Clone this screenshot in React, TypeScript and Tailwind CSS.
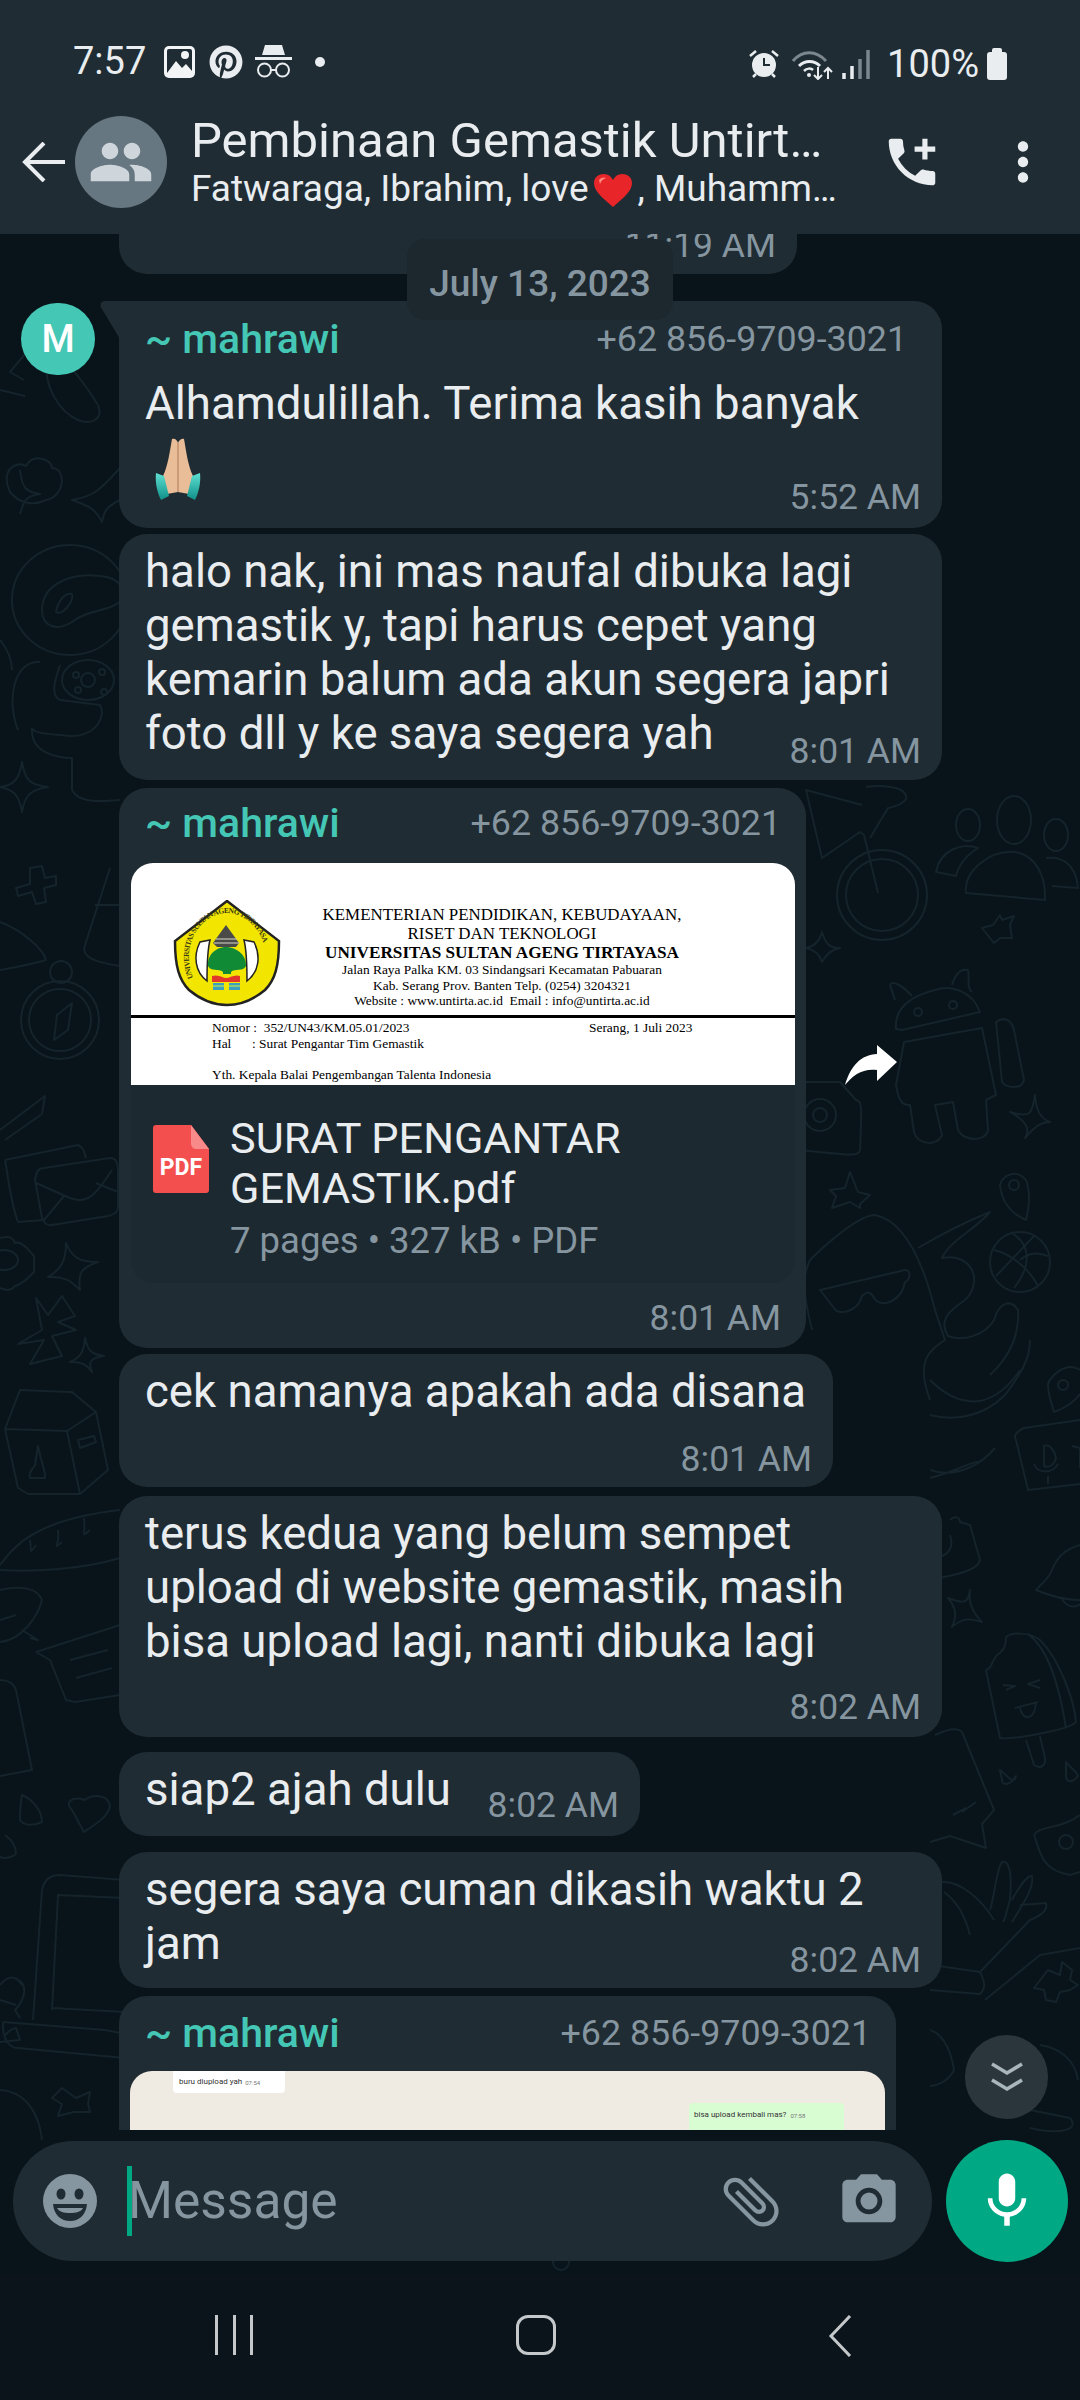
import type { ReactNode } from "react";
import { FaPinterest } from "react-icons/fa";
import { MdAddIcCall, MdAttachFile, MdCameraAlt, MdMic, MdMoreVert, MdPeople } from "react-icons/md";

const dots = [
  [44, 345], [74, 372], [106, 352], [70, 425], [36, 520], [74, 524], [118, 440], [60, 860], [30, 835], [75, 835], [87, 858], [15, 1085],
  [69, 905], [960, 805], [929, 840], [957, 880], [938, 936], [875, 962], [855, 1000], [869, 1012], [995, 970], [1015, 990], [1036, 935], [1040, 1023],
  [1047, 1067], [896, 1128], [900, 1154], [918, 1155], [914, 1195], [1030, 1155], [978, 1165], [1058, 1172], [1070, 1225], [998, 1304],
  [102, 1241], [14, 1318], [14, 1362], [110, 1306], [66, 1600], [100, 1590], [78, 1606], [39, 1690], [51, 1730], [80, 1734], [80, 1762], [98, 1780],
  [52, 1788], [50, 1854], [92, 1854], [34, 2060], [58, 2068], [1002, 1492], [1017, 1518], [1047, 1512], [1002, 1542], [1006, 1564], [1008, 1593],
  [1030, 1608], [1072, 1632], [982, 1650], [947, 1656], [972, 1673], [951, 1684], [964, 1714], [1010, 1803], [937, 1855], [960, 1860], [1058, 2025],
  [961, 2034], [565, 2250], [30, 2265], [70, 2268],
];

function Wallpaper() {
  return (
    <svg className="absolute inset-0 h-full w-full" viewBox="0 234 1080 2040" fill="none" stroke="#15232b" strokeWidth="2" strokeLinejoin="round">
      {/* upper left */}
      <path d="M48 350C70 360 92 395 98 405 104 420 90 425 78 420 60 412 40 385 48 350Z" />
      <path d="M10 492C0 470 16 460 26 466 34 452 52 460 52 468 66 468 66 496 46 500 34 506 20 504 10 492Z" />
      <path d="M120 468C98 492 94 496 72 500 90 506 96 510 102 522 104 510 108 506 120 500M20 470C22 488 26 492 40 494 26 496 24 500 20 514M25 354L10 372 24 380M0 390L25 396" />
      <ellipse cx="70" cy="600" rx="58" ry="55" />
      <path d="M42 610C42 585 70 572 100 576 122 578 124 590 122 600 110 612 90 608 72 622 56 632 42 626 42 610ZM56 612C58 600 66 592 72 594 74 602 62 616 56 612ZM40 662C14 660 6 700 18 730M60 665C55 680 50 695 60 700L100 705C106 715 98 736 70 736 50 734 34 734 32 728M32 728C30 755 62 758 72 758L72 790C80 806 110 800 120 800M0 640C8 650 12 660 12 670" />
      <ellipse cx="88" cy="680" rx="26" ry="20" />
      <circle cx="88" cy="680" r="7" />
      <circle cx="76" cy="675" r="3" />
      <circle cx="102" cy="672" r="3" />
      <circle cx="78" cy="690" r="3" />
      <circle cx="104" cy="692" r="3" />
      <path d="M22 762C25 780 30 785 48 787 30 790 25 795 22 812 19 795 14 790 0 787 14 785 19 780 22 762ZM30 868L42 866 45 878 56 876 56 885 44 888 46 902 36 904 32 892 18 896 16 888 30 884Z" />
      <path d="M110 868L85 945C81 956 92 962 120 966M95 905H120M0 922C22 930 44 950 46 960 30 965 10 968 0 970" />
      <circle cx="60" cy="1020" r="39" />
      <circle cx="60" cy="1020" r="31" />
      <circle cx="61" cy="972" r="11" />
      <path d="M54 1040L57 1015 72 1003 68 1030Z" />
      {/* lower left */}
      <path d="M0 1130L45 1096 42 1114 5 1140" />
      <path d="M5 1160L78 1145C84 1148 84 1152 86 1158M18 1222C10 1200 8 1175 5 1160M18 1222L44 1220" />
      <path d="M35 1180C36 1170 40 1168 44 1168L110 1158C116 1158 118 1162 118 1172V1205C118 1214 114 1214 108 1216L52 1225C46 1226 44 1222 42 1218ZM36 1183L70 1198C86 1204 94 1198 112 1170M96 1183L118 1192M44 1220L64 1196" />
      <path d="M0 1238C8 1236 12 1236 15 1243 22 1240 30 1252 34 1256V1272C26 1280 22 1284 15 1286 10 1292 4 1290 0 1288" />
      <ellipse cx="4" cy="1260" rx="14" ry="10" />
      <path d="M66 1243C72 1258 80 1262 98 1262 80 1268 78 1274 80 1290 72 1282 66 1276 48 1277 60 1270 66 1262 66 1243Z" />
      <path d="M36 1298L48 1315 62 1296 75 1316 58 1322 76 1330 52 1336 62 1356 30 1364 44 1340 18 1344 42 1330Z" />
      <path d="M85 1338C88 1350 90 1354 104 1356 90 1358 88 1362 92 1372 86 1364 82 1362 70 1362 80 1358 84 1352 85 1338Z" />
      <path d="M20 1390L70 1392H72L96 1412 108 1470 80 1494 28 1494 18 1488 5 1429ZM5 1429L67 1431 96 1412M67 1431L80 1494" />
      <path d="M35 1465C32 1470 28 1473 30 1478H45C46 1472 42 1466 38 1446ZM78 1440L94 1436 96 1442 80 1448Z" />
      <path d="M0 1565C12 1550 30 1520 120 1510M0 1570C30 1572 80 1570 120 1558M30 1540C32 1550 28 1556 36 1545M58 1530C60 1546 52 1550 62 1542M84 1518C86 1536 80 1538 90 1530" />
      <path d="M0 1590C20 1585 38 1588 42 1600 38 1616 22 1640 0 1642M22 1630L38 1640 30 1638M0 1620L16 1615" />
      <path d="M36 1652L120 1625M36 1652L50 1660 66 1700 75 1702 120 1695M70 1660L108 1650M76 1678L112 1668" />
      <path d="M0 1680C10 1680 14 1684 16 1690L32 1770 0 1776" />
      <path d="M72 1810C64 1802 72 1796 85 1800 92 1794 108 1794 110 1806 108 1818 92 1826 84 1832ZM22 1795C34 1800 42 1812 42 1822 34 1826 24 1826 20 1820 20 1814 20 1806 22 1795ZM5 1835C12 1840 16 1846 16 1854 8 1860 0 1858 0 1856" />
      <path d="M33 2020L42 1890C44 1880 50 1875 60 1875L125 1880M52 2010L58 1895 125 1898M52 2008L125 2012M3 2022L105 2030 125 2034M3 2022C2 2040 10 2048 18 2048L125 2058" />
      <path d="M0 1985C8 1975 16 1975 22 1985L18 1980C28 1985 25 2000 15 2010L20 2018M0 2000L16 2005" />
      <path d="M5 2035C8 2032 12 2028 16 2028L20 2040 0 2042" />
      <path d="M0 2090C30 2092 40 2120 42 2140M62 2088L76 2098 90 2092 88 2104 90 2112 74 2112 58 2116 62 2104 52 2098Z" />
      {/* right, around the forward button */}
      <circle cx="882" cy="895" r="45" />
      <circle cx="882" cy="895" r="36" />
      <path d="M878 893L864 835 860 832 822 858 806 790 862 805M870 838L888 808C900 806 908 800 906 796 904 786 880 785 866 787" />
      <ellipse cx="968" cy="825" rx="12" ry="16" />
      <ellipse cx="1014" cy="820" rx="17" ry="24" />
      <ellipse cx="1056" cy="835" rx="12" ry="16" />
      <path d="M966 893C964 870 990 850 1016 852 1036 856 1046 876 1045 900ZM936 872C940 850 962 842 978 848 962 858 958 868 956 876ZM1046 858C1062 856 1076 864 1078 888L1052 886" />
      <path d="M1000 915L993 925 982 928 990 938 994 943 1000 938 1012 938 1010 925 1014 916 1002 920ZM822 932C826 945 830 948 840 948 830 950 826 955 822 962 820 955 816 950 806 948 816 946 820 940 822 932Z" />
      <path d="M896 1029C894 1005 915 995 935 990 950 985 972 990 980 1012L902 1030ZM895 1000L890 985C892 980 902 985 912 996M952 985C955 975 960 968 968 970 970 978 966 988 972 992" />
      <circle cx="918" cy="1012" r="4" />
      <circle cx="953" cy="1005" r="4" />
      <path d="M904 1042L982 1028 996 1095 986 1100 988 1130C986 1142 964 1142 958 1130L953 1102 935 1105 942 1135C938 1146 918 1146 914 1132L910 1105C900 1106 898 1096 896 1085ZM996 1022C1004 1016 1012 1020 1014 1030L1024 1080C1022 1090 1006 1088 1002 1082Z" />
      <path d="M1035 1095C1032 1115 1030 1118 1010 1112 1028 1122 1030 1130 1025 1138 1036 1125 1042 1122 1050 1122 1040 1118 1036 1110 1035 1095Z" />
      <path d="M800 1082H840L856 1100C862 1102 862 1104 860 1150 858 1156 855 1156 800 1150" />
      <circle cx="820" cy="1115" r="16" />
      <circle cx="820" cy="1115" r="7" />
      <path d="M850 1172L858 1192 870 1195 860 1204 860 1208 850 1202 832 1208 836 1196 830 1190 845 1188ZM1000 1185C1002 1176 1016 1168 1026 1180 1032 1196 1028 1212 1026 1220 1012 1214 1002 1204 1000 1185Z" />
      <circle cx="1014" cy="1185" r="5" />
      <ellipse cx="1020" cy="1262" rx="30" ry="30" />
      <path d="M994 1250C1012 1254 1030 1270 1038 1286M1012 1233C1026 1242 1036 1260 1014 1288M1034 1236L996 1276M1048 1256C1038 1252 1030 1252 1020 1260" />
      <path d="M810 1260C830 1240 860 1215 875 1215 900 1220 920 1250 935 1310L945 1340C930 1350 915 1360 930 1400M812 1330C805 1300 800 1280 810 1260" />
      <path d="M820 1290L905 1270C912 1270 910 1280 905 1282 902 1300 882 1310 874 1298 870 1290 866 1292 862 1296 858 1312 838 1316 834 1308Z" />
      <path d="M918 1248C945 1232 970 1220 990 1212 975 1230 950 1240 942 1258 970 1252 985 1280 965 1300 950 1310 938 1320 948 1336 964 1342 985 1335 994 1320 1000 1300 1012 1300 1018 1310 1020 1340 1006 1360 990 1375" />
      {/* lower right */}
      <path d="M1016 1440C1012 1434 1020 1430 1024 1428L1080 1420M1016 1440L1028 1490 1080 1484" />
      <path d="M1044 1446C1050 1444 1054 1450 1056 1458 1054 1466 1048 1468 1044 1466ZM1034 1464C1038 1474 1052 1474 1058 1464M1048 1476V1484M1072 1446L1080 1448V1468" />
      <path d="M1080 1370C1066 1360 1048 1378 1048 1385 1048 1395 1052 1405 1054 1412 1066 1408 1076 1400 1080 1394" />
      <circle cx="1063" cy="1385" r="5" />
      <path d="M930 1380C950 1400 986 1420 1020 1370M930 1415C950 1420 980 1420 1005 1395 1020 1375 1030 1360 1030 1340M930 1470C960 1480 985 1460 995 1448M930 1478C960 1470 975 1460 978 1462" />
      <path d="M1080 1545C1062 1550 1056 1560 1052 1570 1048 1580 1040 1585 1036 1590 1050 1596 1064 1600 1080 1600M1062 1598C1066 1608 1076 1608 1080 1604" />
      <path d="M950 1520C956 1515 960 1518 960 1522L970 1525 980 1560C978 1570 960 1574 930 1580M930 1555C945 1560 955 1550 950 1535" />
      <path d="M970 1590C968 1602 966 1605 948 1598 958 1610 956 1618 952 1627 962 1618 970 1618 982 1622 972 1612 968 1602 970 1590Z" />
      <path d="M1006 1637C1006 1648 1002 1652 996 1656 990 1665 992 1668 986 1670L1000 1738C1010 1740 1070 1730 1076 1722 1074 1700 1060 1660 1040 1640 1030 1632 1012 1632 1006 1637ZM1028 1634C1050 1650 1060 1690 1066 1728" />
      <path d="M1003 1685L1015 1686 1006 1690M1040 1680L1028 1684 1040 1688M1015 1708L1038 1702M1020 1708C1022 1720 1034 1722 1036 1703M1026 1740L1034 1765C1042 1770 1046 1764 1045 1758L1040 1736" />
      <path d="M1000 1770C1006 1774 1014 1786 1016 1776 1010 1786 1002 1786 1002 1780ZM1066 1762C1070 1768 1076 1770 1078 1776 1072 1784 1066 1782 1066 1776Z" />
      <path d="M935 1735C950 1728 958 1728 962 1732L994 1810 982 1824 986 1848 950 1836 930 1842M953 1815L966 1808M962 1812L976 1802" />
      <path d="M1034 1835C1040 1825 1060 1830 1080 1815M1034 1835C1040 1850 1040 1870 1070 1875 L1080 1872" />
      <circle cx="1066" cy="1842" r="7" />
      <path d="M940 1882C960 1880 982 1900 994 1920M944 1892C955 1900 965 1915 970 1935 M990 1910C995 1895 996 1870 1002 1862 1010 1860 1012 1875 1010 1900 1006 1912 1006 1918 1003 1922M1012 1900C1020 1885 1028 1875 1032 1876 1034 1890 1022 1905 1012 1922M1020 1905L1046 1903C1048 1910 1040 1916 1030 1920L980 1972C985 1982 986 1988 980 1994L930 1990M980 1972L932 1965M985 2000L1040 1955 1080 1948" />
      <path d="M1048 1970L1060 1975 1062 1962 1072 1970 1070 1980 1078 1985 1070 1990 1060 1992 1056 2002 1046 2000 1044 1990 1034 1988Z" />
      <path d="M930 2030C945 2034 952 2056 954 2070 948 2082 936 2086 930 2086M1040 2045C1060 2048 1075 2060 1078 2080M1030 2110L1070 2118C1080 2130 1060 2135 1030 2128" />
      <circle cx="561" cy="2262" r="8" />
    </svg>
  );
}

function Sender({ phone }: { phone: string }) {
  return (
    <div className="flex h-[44px] items-center justify-between">
      <span className="text-[41px] font-medium text-[#45c7b6]">~ mahrawi</span>
      <span className="text-[35.8px] text-[#8696a0]">{phone}</span>
    </div>
  );
}

function Time({ value, className }: { value: string; className: string }) {
  return <div className={`h-[40px] text-right text-[35.5px] leading-[40px] text-[#8696a0] ${className}`}>{value}</div>;
}

function Bubble({ className, children }: { className: string; children: ReactNode }) {
  return <div className={`relative rounded-[28px] bg-[#202c33] ${className}`}>{children}</div>;
}

function Logo() {
  return (
    <svg viewBox="0 0 108 107" className="-mt-[5px] h-[107px] w-[108px] shrink-0">
      <defs>
        <path id="arc" d="M20 78C6 42 30 13 54 13 78 13 102 42 90 80" fill="none" />
      </defs>
      <path d="M54 1L106 41C106 66 102 80 92 90 80 100 66 105 54 105 42 105 28 100 16 90 6 80 2 66 2 41Z" fill="#f2e600" stroke="#222" strokeWidth="2.5" />
      <text fontFamily="Liberation Serif" fontSize="7.6" fontWeight="700" fill="#3b3a12">
        <textPath href="#arc" textLength="136">UNIVERSITAS SULTAN AGENG TIRTAYASA</textPath>
      </text>
      <path d="M53 25L61 36 66 43 63 47H44L40 43 45 36Z" fill="#4a4a48" />
      <path d="M43 39H64M41 43H66" stroke="#d8d8c8" strokeWidth="1.2" />
      <path d="M27 42C20 56 22 72 34 81 34 66 34 52 37 40Z" fill="#fff" stroke="#222" strokeWidth="1.5" />
      <path d="M81 42C88 56 86 72 74 81 74 66 74 52 71 40Z" fill="#fff" stroke="#222" strokeWidth="1.5" />
      <path d="M53 47C64 47 74 56 73 66 70 72 62 68 58 72V74H50V72C46 68 38 72 35 66 34 56 42 47 53 47Z" fill="#118a35" />
      <path d="M39 76C46 74 50 78 53 78 57 78 61 74 67 76V82H39Z" fill="#e2382b" />
      <path d="M40 83H51V90H40ZM56 83H67V90H56Z" fill="#3a9fc0" />
      <path d="M40 86H51M56 86H67" stroke="#9fdc66" strokeWidth="1.4" />
    </svg>
  );
}

function Letterhead() {
  return (
    <div className="h-[222px] overflow-hidden rounded-t-[22px] bg-white pt-[42px] font-['Liberation_Serif',serif] text-black">
      <div className="flex h-[110px] items-start pl-[42px]">
        <Logo />
        <div className="ml-[4px] w-[434px] whitespace-nowrap text-center">
          <div className="text-[16.9px] leading-[19px]">KEMENTERIAN PENDIDIKAN, KEBUDAYAAN,</div>
          <div className="text-[16.9px] leading-[19px]">RISET DAN TEKNOLOGI</div>
          <div className="text-[17.2px] font-bold leading-[19px]">UNIVERSITAS SULTAN AGENG TIRTAYASA</div>
          <div className="text-[13.4px] leading-[16px]">Jalan Raya Palka KM. 03 Sindangsari Kecamatan Pabuaran</div>
          <div className="text-[13.4px] leading-[15px]">Kab. Serang Prov. Banten Telp. (0254) 3204321</div>
          <div className="text-[13.4px] leading-[16px]">Website : www.untirta.ac.id&nbsp; Email : info@untirta.ac.id</div>
        </div>
      </div>
      <div className="h-[3px] bg-black" />
      <div className="pl-[81px] pt-[2px] text-[13.4px] leading-[16px]">
        <div className="flex">
          <span className="w-[377px]">Nomor :&nbsp; 352/UN43/KM.05.01/2023</span>
          <span>Serang, 1 Juli 2023</span>
        </div>
        <div className="flex">
          <span className="w-[40px]">Hal</span>
          <span>: Surat Pengantar Tim Gemastik</span>
        </div>
        <div className="mt-[15px]">Yth. Kepala Balai Pengembangan Talenta Indonesia</div>
      </div>
    </div>
  );
}

function PdfIcon() {
  return (
    <svg viewBox="0 0 56 68" className="h-[68px] w-[56px] shrink-0">
      <path d="M3 0H38L56 24V65C56 67 55 68 53 68H3C1 68 0 67 0 65V3C0 1 1 0 3 0Z" fill="#f44f4f" />
      <path d="M38 0L56 24H44C40 24 38 22 38 18Z" fill="#f98a8a" />
      <text x="28" y="50" textAnchor="middle" fontFamily="Roboto" fontWeight="700" fontSize="23" fill="#fff">
        PDF
      </text>
    </svg>
  );
}

function PrayingHands() {
  return (
    <svg viewBox="0 0 46 62" className="h-[62px] w-[46px]">
      <defs>
        <linearGradient id="cuff" x1="0" y1="0" x2="0" y2="1">
          <stop offset="0" stopColor="#5fe0d2" />
          <stop offset="1" stopColor="#0f8f88" />
        </linearGradient>
      </defs>
      <path d="M17 1C20 0 22 2 23 5 24 2 27 0 29 1 31 12 33 28 38 38L34 56 23 54 12 56 8 38C13 28 15 12 17 1Z" fill="#e8bd97" />
      <path d="M23 5V54" stroke="#c3906c" strokeWidth="1.5" />
      <path d="M1 35L9 38 14 58 6 62C2 54 0 44 1 35ZM45 35L37 38 32 58 40 62C44 54 46 44 45 35Z" fill="url(#cuff)" />
    </svg>
  );
}

function Incognito() {
  return (
    <svg viewBox="0 0 37 34" className="h-[34px] w-[37px]" fill="#e9edef">
      <path d="M10 0H27L30 10H7Z" />
      <rect x="0" y="12" width="37" height="3" />
      <circle cx="9.5" cy="25" r="6.5" fill="none" stroke="#e9edef" strokeWidth="2" />
      <circle cx="27.5" cy="25" r="6.5" fill="none" stroke="#e9edef" strokeWidth="2" />
      <path d="M16 24h5v2h-5z" />
    </svg>
  );
}

function ImageIcon() {
  return (
    <svg viewBox="0 0 31 32" className="h-[32px] w-[31px]">
      <rect width="31" height="32" rx="5" fill="#f2f4f5" />
      <rect x="3" y="3" width="25" height="26" rx="2" fill="#1f2c34" />
      <path d="M3 27L12 15 18 22 22 18 28 25V29H3Z" fill="#f2f4f5" />
      <circle cx="21" cy="9" r="4" fill="#f2f4f5" />
    </svg>
  );
}

function AlarmIcon() {
  return (
    <svg viewBox="0 0 30 29" className="h-[29px] w-[30px]">
      <circle cx="15" cy="15" r="12" fill="#e9edef" />
      <path d="M15 8V15H21" fill="none" stroke="#1f2c34" strokeWidth="2" />
      <path d="M1 6L7 1M29 6L23 1M4 27L7 24M26 27L23 24" stroke="#e9edef" strokeWidth="2.5" />
    </svg>
  );
}

function WifiSignal() {
  return (
    <svg viewBox="0 0 78 31" className="h-[31px] w-[78px]" fill="none">
      <path d="M1 12C10 1 24 1 34 12" stroke="#7c868d" strokeWidth="3" />
      <path d="M7 17C13 11 22 11 28 17" stroke="#e9edef" strokeWidth="3" />
      <path d="M12 22C15 19 19 19 21 21" stroke="#e9edef" strokeWidth="2.5" />
      <circle cx="17" cy="26" r="2" fill="#e9edef" />
      <path d="M26 18v12m-4-4 4 4 4-4M36 30V19m-4 4 4-4 4 4" stroke="#e9edef" strokeWidth="2" />
      <path d="M52 24v6M60 17v13" stroke="#e9edef" strokeWidth="3.5" />
      <path d="M68 10v20M76 1v29" stroke="#7c868d" strokeWidth="3.5" />
    </svg>
  );
}

function ForwardIcon() {
  return (
    <svg viewBox="0 0 52 40" className="h-[40px] w-[52px]" fill="#fff">
      <path d="M32 0L52 17 32 36V25C18 23 8 30 0 40 6 20 16 10 32 9Z" />
    </svg>
  );
}

function Heart() {
  return (
    <svg viewBox="0 0 40 33" className="ml-[4px] mr-[5px] inline-block h-[33px] w-[40px] align-[-6px]">
      <path d="M20 33C7 22 1 16 1 9 1 3 6 0 11 0 15 0 18 2 20 6 22 2 25 0 29 0 34 0 39 3 39 9 39 16 33 22 20 33Z" fill="#e8262a" />
      <path d="M6 6C8 3 12 3 13 4 10 5 8 7 7 10Z" fill="#ff8a80" />
    </svg>
  );
}

function SmileIcon() {
  return (
    <svg viewBox="0 0 54 54" className="h-[54px] w-[54px] shrink-0">
      <circle cx="27" cy="27" r="27" fill="#8696a0" />
      <ellipse cx="18" cy="20" rx="4.5" ry="5.5" fill="#202c33" />
      <ellipse cx="36" cy="20" rx="4.5" ry="5.5" fill="#202c33" />
      <path d="M10 30H44C43 41 36 47 27 47 18 47 11 41 10 30Z" fill="#202c33" />
      <path d="M14 34H40C38 38 33 39 27 39 21 39 16 38 14 34Z" fill="#8696a0" />
    </svg>
  );
}

export default function App() {
  return (
    <div className="flex h-[2400px] w-[1080px] flex-col overflow-hidden bg-[#0b141a] font-['Roboto',sans-serif] text-[#e9edef]">
      {/* status bar + toolbar */}
      <header className="relative z-10 h-[234px] shrink-0 bg-[#1f2c34]">
        <div className="flex h-[116px] items-start pl-[73px] pr-[73px] pt-[40px]">
          <span className="w-[91px] text-[38px] leading-[42px]">7:57</span>
          <div className="mt-[5px] flex items-center">
            <ImageIcon />
            <FaPinterest className="ml-[14px] text-[34px]" />
            <span className="ml-[12px]"><Incognito /></span>
            <span className="ml-[23px] h-[10px] w-[10px] rounded-full bg-[#e9edef]" />
          </div>
          <div className="ml-auto mt-[3px] flex items-center">
            <AlarmIcon />
            <span className="ml-[13px]"><WifiSignal /></span>
            <span className="ml-[17px] text-[38px] leading-[42px]">100%</span>
            <span className="relative ml-[8px] mt-[3px] h-[28px] w-[20px] rounded-[3px] bg-[#e9edef]">
              <span className="absolute left-[5px] top-[-4px] h-[4px] w-[10px] rounded-t-[2px] bg-[#e9edef]" />
            </span>
          </div>
        </div>
        <div className="flex h-[92px] items-center">
          <svg viewBox="0 0 43 40" className="ml-[22px] h-[40px] w-[43px] shrink-0" fill="none" stroke="#e9edef" strokeWidth="4">
            <path d="M43 20H3M22 1L3 20 22 39" />
          </svg>
          <div className="ml-[10px] flex h-[92px] w-[92px] shrink-0 items-center justify-center rounded-full bg-[#667781]">
            <MdPeople className="text-[66px] text-[#cfd6db]" />
          </div>
          <div className="ml-[24px] w-[670px] shrink-0">
            <div className="whitespace-nowrap text-[49px] leading-[54px]">Pembinaan Gemastik Untirt…</div>
            <div className="whitespace-nowrap text-[37px] leading-[42px]">
              Fatwaraga, Ibrahim, love
              <Heart />, Muhamm…
            </div>
          </div>
          <MdAddIcCall className="ml-[20px] shrink-0 text-[62px]" />
          <MdMoreVert className="ml-[49px] shrink-0 text-[62px]" />
        </div>
      </header>

      <main className="relative flex min-h-0 flex-1 flex-col bg-[#08141a]">
        <Wallpaper />

        {/* date chip */}
        <div className="absolute left-[407px] top-[5px] z-10 flex h-[81px] w-[266px] items-center justify-center rounded-[18px] bg-[#1c272e] pt-[8px] text-[37px] font-medium text-[#8696a0]">
          July 13, 2023
        </div>

        {/* message list */}
        <div className="relative min-h-0 flex-1 overflow-hidden pl-[119px]">
          <Bubble className="mb-[27px] flex h-[40px] w-[678px] items-end justify-end overflow-hidden rounded-t-none pb-[9px] pr-[21px]">
            <span className="text-[35.5px] leading-[40px] text-[#8696a0]">11:19 AM</span>
          </Bubble>

          <Bubble className="w-[823px] rounded-tl-none pb-[11px] pl-[26px] pr-[26px] pt-[17px]">
            <svg viewBox="0 0 20 38" className="absolute left-[-19px] top-0 h-[38px] w-[20px]">
              <path d="M20 0H5C1 0-1 4 2 8L20 38Z" fill="#202c33" />
            </svg>
            <div className="absolute left-[-98px] top-[2px] flex h-[72px] w-[74px] items-center justify-center rounded-full bg-[#45c7b6] text-[38px] font-medium text-white">
              M
            </div>
            <div className="pr-[9px]">
              <Sender phone="+62 856-9709-3021" />
            </div>
            <div className="mt-[15px] text-[45.6px] leading-[54px]">Alhamdulillah. Terima kasih banyak</div>
            <div className="ml-[10px] mt-[7px] h-[62px]"><PrayingHands /></div>
            <Time value="5:52 AM" className="-mr-[5px] -mt-[23px]" />
          </Bubble>

          <Bubble className="mt-[6px] w-[823px] pb-[9px] pl-[26px] pr-[21px] pt-[11px]">
            <div className="text-[45.6px] leading-[54px]">
              halo nak, ini mas naufal dibuka lagi
              <br />
              gemastik y, tapi harus cepet yang
              <br />
              kemarin balum ada akun segera japri
              <br />
              foto dll y ke saya segera yah
            </div>
            <Time value="8:01 AM" className="-mt-[30px]" />
          </Bubble>

          <div className="mt-[8px] flex items-center">
            <Bubble className="h-[560px] w-[687px] shrink-0 pb-[11px] pt-[14px]">
              <div className="pl-[26px] pr-[25px]">
                <Sender phone="+62 856-9709-3021" />
              </div>
              <div className="ml-[12px] mr-[11px] mt-[17px]">
                <Letterhead />
                <div className="flex h-[198px] items-start gap-[21px] rounded-b-[22px] bg-[#1d2930] pl-[22px] pt-[29px]">
                  <div className="pt-[11px]"><PdfIcon /></div>
                  <div>
                    <div className="text-[43.2px] leading-[50px]">
                      SURAT PENGANTAR
                      <br />
                      GEMASTIK.pdf
                    </div>
                    <div className="mt-[6px] text-[36.5px] leading-[42px] text-[#8696a0]">7 pages • 327 kB • PDF</div>
                  </div>
                </div>
              </div>
              <Time value="8:01 AM" className="mr-[25px] mt-[15px]" />
            </Bubble>
            <div className="mb-[6px] ml-[39px]"><ForwardIcon /></div>
          </div>

          <Bubble className="mt-[6px] w-[714px] pb-[8px] pl-[26px] pr-[21px] pt-[11px]">
            <div className="text-[45.6px] leading-[54px]">cek namanya apakah ada disana</div>
            <Time value="8:01 AM" className="mt-[20px]" />
          </Bubble>

          <Bubble className="mt-[9px] w-[823px] pb-[10px] pl-[26px] pr-[21px] pt-[11px]">
            <div className="text-[45.6px] leading-[54px]">
              terus kedua yang belum sempet
              <br />
              upload di website gemastik, masih
              <br />
              bisa upload lagi, nanti dibuka lagi
            </div>
            <Time value="8:02 AM" className="mt-[18px]" />
          </Bubble>

          <Bubble className="mt-[15px] w-[521px] pb-[11px] pl-[26px] pr-[21px] pt-[11px]">
            <div className="text-[45.6px] leading-[54px]">siap2 ajah dulu</div>
            <Time value="8:02 AM" className="-mt-[32px]" />
          </Bubble>

          <Bubble className="mt-[16px] w-[823px] pb-[8px] pl-[26px] pr-[21px] pt-[11px]">
            <div className="text-[45.6px] leading-[54px]">
              segera saya cuman dikasih waktu 2
              <br />
              jam
            </div>
            <Time value="8:02 AM" className="-mt-[31px]" />
          </Bubble>

          <Bubble className="mt-[8px] h-[200px] w-[777px] rounded-b-none pt-[16px]">
            <div className="pl-[26px] pr-[25px]">
              <Sender phone="+62 856-9709-3021" />
            </div>
            <div className="mx-[11px] mt-[15px] h-[120px] rounded-t-[22px] bg-[#efeae2] pl-[43px] text-[8px] text-[#333]">
              <div className="flex h-[22px] w-[112px] items-center gap-[3px] rounded-b-[4px] bg-white pl-[6px]">
                buru diupload yah <span className="text-[6px] text-[#777]">07:54</span>
              </div>
              <div className="ml-[516px] mt-[10px] flex h-[40px] w-[155px] items-start gap-[4px] rounded-[4px] bg-[#d9fdd3] pl-[5px] pt-[6px]">
                bisa upload kembali mas? <span className="pt-[2px] text-[6px] text-[#777]">07:58</span>
              </div>
            </div>
          </Bubble>
        </div>

        {/* scroll to bottom */}
        <div className="absolute left-[965px] top-[1801px] flex h-[84px] w-[83px] items-center justify-center rounded-full bg-[#2a363c]">
          <svg viewBox="0 0 32 30" className="h-[30px] w-[32px]" fill="none" stroke="#a9b6bc" strokeWidth="3.5">
            <path d="M1 2L16 11 31 2M1 18L16 27 31 18" />
          </svg>
        </div>

        {/* composer */}
        <div className="relative mt-[11px] flex h-[122px] shrink-0 items-center pb-[2px] pl-[13px]">
          <div className="flex h-[120px] w-[919px] items-center rounded-full bg-[#202c33] pl-[30px]">
            <SmileIcon />
            <span className="ml-[30px] h-[70px] w-[5px] shrink-0 bg-[#00a884]" />
            <span className="ml-[-4px] text-[51.5px] text-[#8696a0]">Message</span>
            <MdAttachFile className="ml-auto -rotate-45 text-[68px] text-[#8696a0]" />
            <MdCameraAlt className="ml-[52px] mr-[31px] text-[64px] text-[#8696a0]" />
          </div>
          <div className="ml-[14px] flex h-[122px] w-[122px] items-center justify-center rounded-full bg-[#00a884]">
            <MdMic className="text-[66px] text-white" />
          </div>
        </div>
        <div className="relative h-[11px] shrink-0" />
      </main>

      {/* android nav bar */}
      <nav className="flex h-[126px] shrink-0 items-start bg-[#0b141a] pt-[41px]">
        <div className="ml-[215px] flex h-[40px] w-[38px] justify-between">
          <span className="h-full w-[3px] bg-[#c4c8ca]" />
          <span className="h-full w-[3px] bg-[#c4c8ca]" />
          <span className="h-full w-[3px] bg-[#c4c8ca]" />
        </div>
        <div className="ml-[263px] h-[40px] w-[40px] rounded-[12px] border-[3px] border-[#c4c8ca]" />
        <svg viewBox="0 0 24 42" className="ml-[272px] h-[42px] w-[24px]" fill="none" stroke="#c4c8ca" strokeWidth="3">
          <path d="M22 1L3 21 22 41" />
        </svg>
      </nav>
    </div>
  );
}
